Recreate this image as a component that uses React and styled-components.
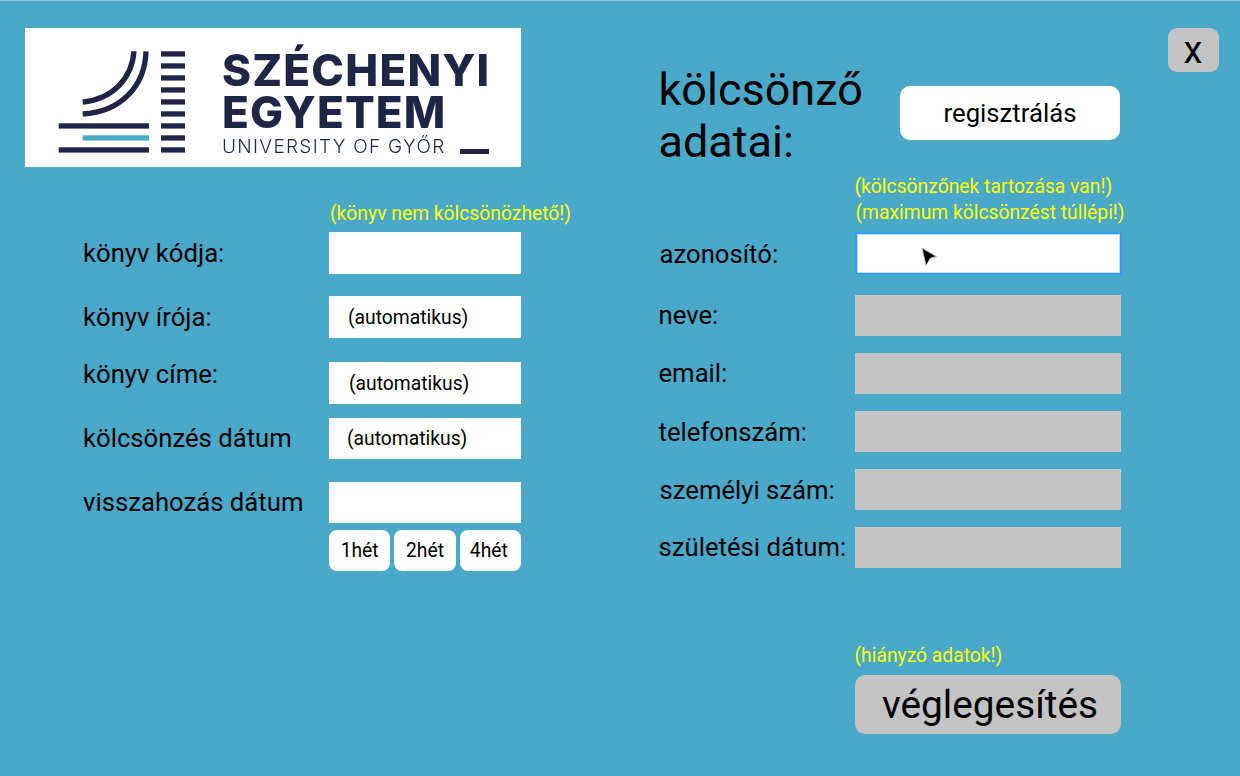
import React from "react";
import styled, { createGlobalStyle } from "styled-components";

const Global = createGlobalStyle`
  html, body { margin: 0; padding: 0; }
  body { background: #4AA9C9; font-family: Roboto, "Noto Sans", sans-serif; color: #000; }
`;

const Page = styled.div`
  width: 1240px;
  height: 776px;
  box-sizing: border-box;
  overflow: hidden;
  border-top: 1px solid #8CC8DC;
  padding: 27px 0 0 25px;
  background: #4AA9C9;
  display: flex;
  align-items: flex-start;
`;

const LeftColumn = styled.section`
  width: 496px;
  flex: none;
  display: flex;
  flex-direction: column;
`;

const Logo = styled.div`
  height: 139px;
  background: #fff;
  display: flex;
  align-items: flex-start;
  color: #1F2547;
  filter: blur(0.3px);
`;

const LogoMark = styled.svg`
  flex: none;
  display: block;
`;

const LogoWords = styled.div`
  margin: 21px 0 0 32px;
  display: flex;
  flex-direction: column;
  font-family: Inter, "Open Sans", sans-serif;
`;

const LogoName = styled.div`
  font-size: 44px;
  line-height: 42px;
  font-weight: 800;
  letter-spacing: ${(p) => p.$spacing}px;
  white-space: nowrap;
`;

const LogoSubRow = styled.div`
  display: flex;
  align-items: flex-end;
  margin-top: 3px;
`;

const LogoSub = styled.div`
  font-size: 19px;
  line-height: 22px;
  font-weight: 300;
  letter-spacing: 1.3px;
  white-space: nowrap;
`;

const LogoDash = styled.div`
  width: 29px;
  height: 5px;
  margin: 0 0 4px 14px;
  background: #1F2547;
`;

const LeftForm = styled.div`
  padding-left: 58px;
  margin-top: 34px;
  display: flex;
  flex-direction: column;
`;

const Warning = styled.div`
  color: #FFFF00;
  font-size: 19.3px;
  line-height: 26px;
  white-space: nowrap;
  padding-left: ${(p) => p.$indent || 0}px;
`;

const WarningSlot = styled.div`
  padding-left: 247px;
  height: 31px;
`;

const Row = styled.div`
  display: grid;
  grid-template-columns: ${(p) => p.$label}px ${(p) => p.$field}px;
  align-items: center;
  margin-top: ${(p) => p.$gap || 0}px;
`;

const Label = styled.div`
  font-size: 25.7px;
  line-height: 30px;
  white-space: nowrap;
  margin-top: ${(p) => -(p.$raise || 0)}px;
  padding-left: ${(p) => p.$nudge || 0}px;
`;

const Field = styled.div`
  height: ${(p) => p.$h || 41}px;
  box-sizing: border-box;
  background: ${(p) => (p.$muted ? "#C4C4C4" : "#fff")};
  font-size: 19.3px;
  display: flex;
  align-items: center;
  padding-left: ${(p) => p.$indent || 0}px;
  position: relative;
`;

const FocusField = styled(Field)`
  border: 2px solid #2F9FF5;
  box-shadow: inset 0 0 0 1px #BFE0FA;
`;

const CursorIcon = styled.svg`
  position: absolute;
  left: 64px;
  top: 13px;
`;

const QuickRow = styled.div`
  margin: 7px 0 0 246px;
  display: grid;
  grid-template-columns: repeat(3, 1fr);
  gap: 4px;
  width: 192px;
`;

const QuickButton = styled.div`
  height: 41px;
  box-sizing: border-box;
  padding-right: ${(p) => p.$trim || 0}px;
  background: #fff;
  border-radius: 8px;
  font-size: 19.3px;
  display: flex;
  align-items: center;
  justify-content: center;
`;

const RightColumn = styled.section`
  width: 462px;
  margin-left: 137.5px;
  flex: none;
  display: flex;
  flex-direction: column;
`;

const Header = styled.div`
  display: flex;
  align-items: center;
  height: 107px;
  margin-top: 36px;
`;

const Title = styled.h1`
  margin: 0 0 3px;
  width: 241.5px;
  font-size: 45px;
  line-height: 52px;
  font-weight: 400;
`;

const RegisterButton = styled.div`
  width: 220px;
  height: 54px;
  margin-bottom: 9px;
  background: #fff;
  border-radius: 10px;
  font-size: 25.7px;
  display: flex;
  align-items: center;
  justify-content: center;
`;

const WarningStack = styled.div`
  box-sizing: border-box;
  padding: 3px 0 0 196px;
  height: 61px;
`;

const BottomWarning = styled.div`
  padding-left: 196px;
  margin-top: 75px;
`;

const FinalButton = styled.div`
  margin: 6px 0 0 196px;
  width: 266px;
  height: 59px;
  box-sizing: border-box;
  padding-left: 5px;
  border-radius: 10px;
  background: #C4C4C4;
  font-size: 38.8px;
  display: flex;
  align-items: center;
  justify-content: center;
`;

const CloseButton = styled.div`
  margin-left: 47px;
  flex: none;
  width: 51px;
  height: 44px;
  border-radius: 9px;
  background: #C4C4C4;
  font-size: 38px;
  line-height: 44px;
  text-align: center;
`;

const Mark = () => (
  <LogoMark width="165" height="139" viewBox="0 0 165 139">
    <g fill="#1F2547">
      {[0, 1, 2, 3, 4, 5, 6, 7, 8].map((n) => (
        <rect key={n} x="136" y={23.3 + 12 * n} width="24" height="5.3" />
      ))}
      <rect x="33.7" y="95.3" width="90.3" height="5.3" />
      <rect x="33.7" y="119.3" width="90.3" height="5.3" />
    </g>
    <rect x="57.7" y="107.3" width="66.3" height="5.3" fill="#4AA9C9" />
    <g fill="none" stroke="#1F2547" strokeWidth="5.3">
      <path d="M121 23.3C120 58 96 84 57.7 86" />
      <path d="M109 23.3C107 50 88 71 57.7 74" />
    </g>
  </LogoMark>
);

const Cursor = () => (
  <CursorIcon width="17" height="20" viewBox="0 0 17 20">
    <path d="M1 1L15.5 9.5L9.5 11L5 18.5Z" fill="#000" stroke="#bbb" strokeWidth="1" />
  </CursorIcon>
);

export default function App() {
  return (
    <>
      <Global />
      <Page>
        <LeftColumn>
          <Logo>
            <Mark />
            <LogoWords>
              <LogoName $spacing={1.2}>SZÉCHENYI</LogoName>
              <LogoName $spacing={1.1}>EGYETEM</LogoName>
              <LogoSubRow>
                <LogoSub>UNIVERSITY OF GYŐR</LogoSub>
                <LogoDash />
              </LogoSubRow>
            </LogoWords>
          </Logo>
          <LeftForm>
            <WarningSlot>
              <Warning>(könyv nem kölcsönözhető!)</Warning>
            </WarningSlot>
            <Row $label={246} $field={192}>
              <Label>könyv kódja:</Label>
              <Field $h={42} />
            </Row>
            <Row $label={246} $field={192} $gap={22}>
              <Label>könyv írója:</Label>
              <Field $h={42} $indent={19}>(automatikus)</Field>
            </Row>
            <Row $label={246} $field={192} $gap={24}>
              <Label $raise={18}>könyv címe:</Label>
              <Field $h={42} $indent={20}>(automatikus)</Field>
            </Row>
            <Row $label={246} $field={192} $gap={14}>
              <Label $raise={2}>kölcsönzés dátum</Label>
              <Field $indent={18}>(automatikus)</Field>
            </Row>
            <Row $label={246} $field={192} $gap={23}>
              <Label $raise={2}>visszahozás dátum</Label>
              <Field />
            </Row>
            <QuickRow>
              <QuickButton>1hét</QuickButton>
              <QuickButton>2hét</QuickButton>
              <QuickButton $trim={3}>4hét</QuickButton>
            </QuickRow>
          </LeftForm>
        </LeftColumn>
        <RightColumn>
          <Header>
            <Title>
              kölcsönző
              <br />
              adatai:
            </Title>
            <RegisterButton>regisztrálás</RegisterButton>
          </Header>
          <WarningStack>
            <Warning>(kölcsönzőnek tartozása van!)</Warning>
            <Warning $indent={1}>(maximum kölcsönzést túllépi!)</Warning>
          </WarningStack>
          <Row $label={196} $field={267}>
            <Label $nudge={1}>azonosító:</Label>
            <FocusField $h={43}>
              <Cursor />
            </FocusField>
          </Row>
          <Row $label={196} $field={266} $gap={20}>
            <Label $raise={2}>neve:</Label>
            <Field $muted />
          </Row>
          <Row $label={196} $field={266} $gap={17}>
            <Label $raise={2}>email:</Label>
            <Field $muted />
          </Row>
          <Row $label={196} $field={266} $gap={17}>
            <Label>telefonszám:</Label>
            <Field $muted />
          </Row>
          <Row $label={196} $field={266} $gap={17}>
            <Label $nudge={1}>személyi szám:</Label>
            <Field $muted />
          </Row>
          <Row $label={196} $field={266} $gap={17}>
            <Label $raise={2}>születési dátum:</Label>
            <Field $muted />
          </Row>
          <BottomWarning>
            <Warning>(hiányzó adatok!)</Warning>
          </BottomWarning>
          <FinalButton>véglegesítés</FinalButton>
        </RightColumn>
        <CloseButton>x</CloseButton>
      </Page>
    </>
  );
}
